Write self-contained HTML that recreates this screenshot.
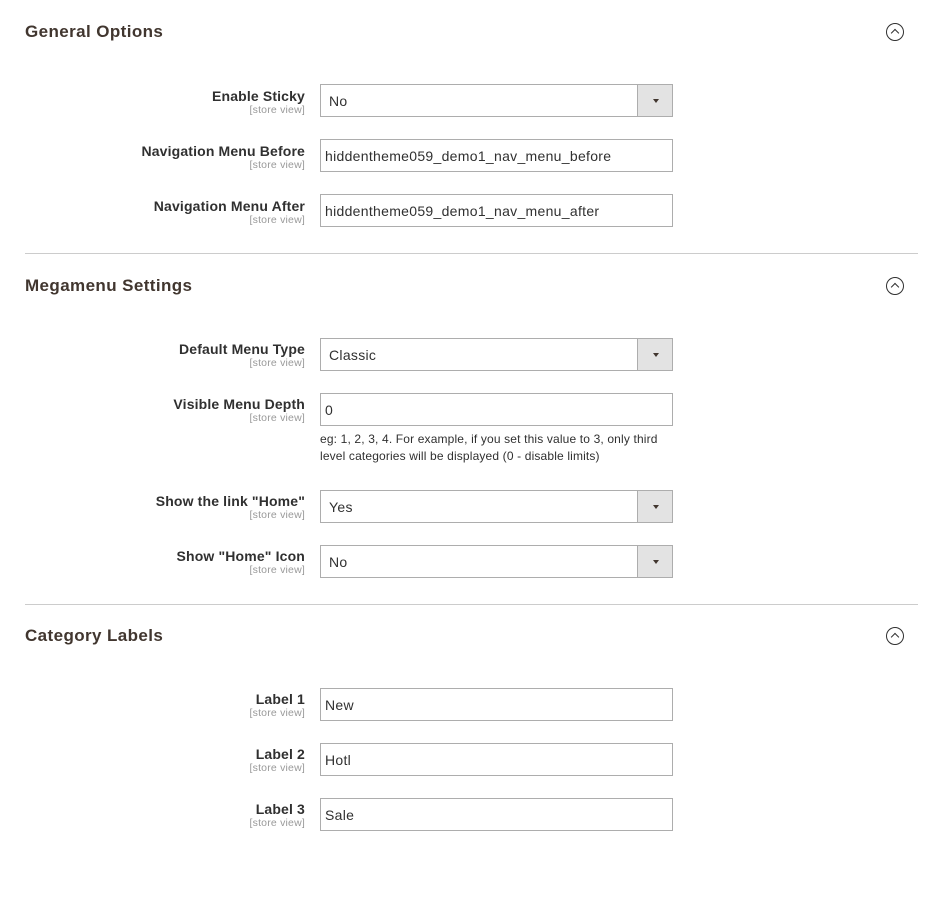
<!DOCTYPE html>
<html><head><meta charset="utf-8"><style>
body{margin:0;width:948px;height:897px;background:#fff;font-family:"Liberation Sans",sans-serif;color:#303030;position:relative;overflow:hidden}
.h{position:absolute;left:25px;font-size:17px;font-weight:bold;color:#41362f;letter-spacing:0.4px}
.ic{position:absolute;left:886px;width:16px;height:16px;border:1px solid #303030;border-radius:50%}
.ic:after{content:"";position:absolute;left:5px;top:6px;width:5px;height:5px;border-left:1.3px solid #303030;border-top:1.3px solid #303030;transform:rotate(45deg)}
.hr{position:absolute;left:25px;width:893px;height:1px;background:#ccc}
.l{position:absolute;right:643px;text-align:right;font-size:14px;font-weight:bold;color:#303030;white-space:nowrap;letter-spacing:0.15px}
.s{position:absolute;right:643px;font-size:10.5px;color:#999;white-space:nowrap;letter-spacing:0.2px}
.in{position:absolute;left:320px;width:351px;height:31px;border:1px solid #adadad;font-size:14px;line-height:33px;box-sizing:content-box;letter-spacing:0.3px}
.in span{padding-left:4px}
.sel span{padding-left:8px}
.sel:after{content:"";position:absolute;right:0;top:0;width:34px;height:31px;background:#e3e3e3;border-left:1px solid #adadad}
.sel:before{content:"";position:absolute;right:13px;top:14px;border:3.5px solid transparent;border-top:4px solid #41362f;border-bottom:0;z-index:1}
.note{position:absolute;left:320px;top:431px;font-size:12px;line-height:17px;color:#303030;letter-spacing:0.15px}
</style></head><body>
<div class="h" style="top:22px">General Options</div><div class="ic" style="top:23px"></div>
<div class="l" style="top:88px">Enable Sticky</div><div class="s" style="top:104px">[store view]</div>
<div class="in sel" style="top:84px"><span>No</span></div>
<div class="l" style="top:143px">Navigation Menu Before</div><div class="s" style="top:159px">[store view]</div>
<div class="in" style="top:139px"><span>hiddentheme059_demo1_nav_menu_before</span></div>
<div class="l" style="top:198px">Navigation Menu After</div><div class="s" style="top:214px">[store view]</div>
<div class="in" style="top:194px"><span>hiddentheme059_demo1_nav_menu_after</span></div>
<div class="hr" style="top:253px"></div>
<div class="h" style="top:276px">Megamenu Settings</div><div class="ic" style="top:277px"></div>
<div class="l" style="top:341px">Default Menu Type</div><div class="s" style="top:357px">[store view]</div>
<div class="in sel" style="top:338px"><span>Classic</span></div>
<div class="l" style="top:396px">Visible Menu Depth</div><div class="s" style="top:412px">[store view]</div>
<div class="in" style="top:393px"><span>0</span></div>
<div class="note">eg: 1, 2, 3, 4. For example, if you set this value to 3, only third<br>level categories will be displayed (0 - disable limits)</div>
<div class="l" style="top:493px">Show the link "Home"</div><div class="s" style="top:509px">[store view]</div>
<div class="in sel" style="top:490px"><span>Yes</span></div>
<div class="l" style="top:548px">Show "Home" Icon</div><div class="s" style="top:564px">[store view]</div>
<div class="in sel" style="top:545px"><span>No</span></div>
<div class="hr" style="top:604px"></div>
<div class="h" style="top:626px">Category Labels</div><div class="ic" style="top:627px"></div>
<div class="l" style="top:691px">Label 1</div><div class="s" style="top:707px">[store view]</div>
<div class="in" style="top:688px"><span>New</span></div>
<div class="l" style="top:746px">Label 2</div><div class="s" style="top:762px">[store view]</div>
<div class="in" style="top:743px"><span>Hotl</span></div>
<div class="l" style="top:801px">Label 3</div><div class="s" style="top:817px">[store view]</div>
<div class="in" style="top:798px"><span>Sale</span></div>
</body></html>
